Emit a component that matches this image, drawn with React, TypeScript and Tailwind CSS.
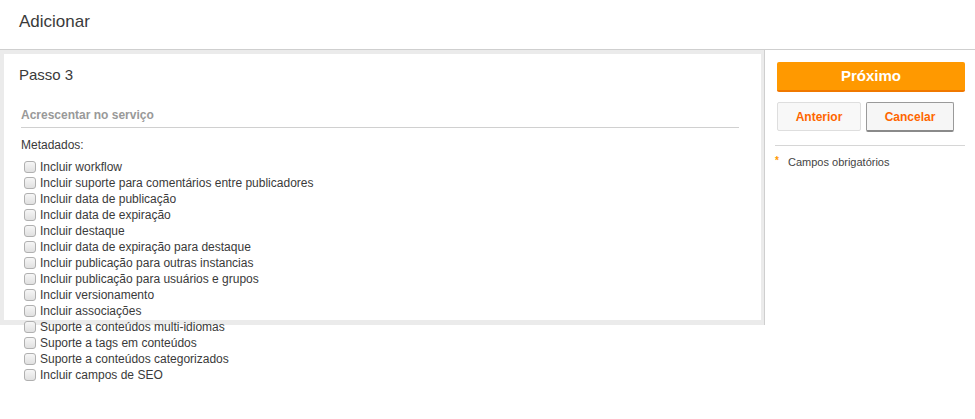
const metadados = [
  "Incluir workflow",
  "Incluir suporte para comentários entre publicadores",
  "Incluir data de publicação",
  "Incluir data de expiração",
  "Incluir destaque",
  "Incluir data de expiração para destaque",
  "Incluir publicação para outras instancias",
  "Incluir publicação para usuários e grupos",
  "Incluir versionamento",
  "Incluir associações",
  "Suporte a conteúdos multi-idiomas",
  "Suporte a tags em conteúdos",
  "Suporte a conteúdos categorizados",
  "Incluir campos de SEO",
];

const Checkbox = () => (
  <span className="block w-[12px] h-[12px] shrink-0 rounded-[3px] border border-[#b0b0b0] bg-gradient-to-b from-[#f6f6f6] to-[#e0e0e0]" />
);

const App = () => {
  return (
    <div className="w-[975px] h-[419px] bg-white text-[#3a3a3a] font-['Liberation_Sans',Arial,sans-serif]">
      {/* header */}
      <div className="h-[50px] border-b border-[#cfcfcf] pl-[19px] pt-[11px]">
        <h1 className="text-[17px] leading-[22px] text-[#3a3a3a]">Adicionar</h1>
      </div>

      <div className="flex">
        {/* main step panel */}
        <div className="w-[764px] h-[275px] bg-[#ebebeb] pt-[4px] pl-[4px] pr-[3px]">
          <div className="h-[266px] bg-white pl-[15px] pt-[12px]">
            <h2 className="text-[15px] leading-[18px]">Passo 3</h2>
            <div className="mt-[23px] ml-[2px] mr-[22px] border-b border-[#d0d0d0] pb-[4px] text-[12px] leading-[16px] font-bold text-[#999]">
              Acrescentar no serviço
            </div>
            <div className="ml-[2px] mt-[10px] text-[12px] leading-[14px]">Metadados:</div>
            <ul className="mt-[7px] ml-[5px]">
              {metadados.map((item) => (
                <li key={item} className="flex items-center h-[16px] text-[12px] leading-[16px]">
                  <Checkbox />
                  <span className="ml-[4px]">{item}</span>
                </li>
              ))}
            </ul>
          </div>
        </div>

        {/* side actions */}
        <div className="w-[211px] h-[275px] border-l border-[#cfcfcf] pl-[12px] pr-[10px] pt-[12px]">
          <button className="w-[188px] h-[30px] rounded-[2px] bg-[#ff9900] border-b-2 border-[#f07800] text-white text-[15px] font-bold leading-[28px]">
            Próximo
          </button>
          <div className="flex gap-[5px] mt-[10px]">
            <button className="w-[84px] h-[29px] rounded-[2px] border border-[#dedede] bg-[#f8f8f8] text-[#ff6600] text-[12px] font-bold">
              Anterior
            </button>
            <button className="w-[88px] h-[30px] rounded-[2px] border border-[#9a9a9a] border-b-2 border-b-[#8a8a8a] bg-[#f6f6f6] text-[#ff6600] text-[12px] font-bold">
              Cancelar
            </button>
          </div>
          <div className="-ml-[2px] mt-[13px] border-t border-[#d6d6d6]" />
          <div className="-ml-[2px] mt-[9px] flex items-center text-[11px] leading-[14px] text-[#444]">
            <span className="text-[#ff9900] text-[10px] font-bold w-[13px] -mt-[2px]">*</span>
            Campos obrigatórios
          </div>
        </div>
      </div>
    </div>
  );
};

export default App;
